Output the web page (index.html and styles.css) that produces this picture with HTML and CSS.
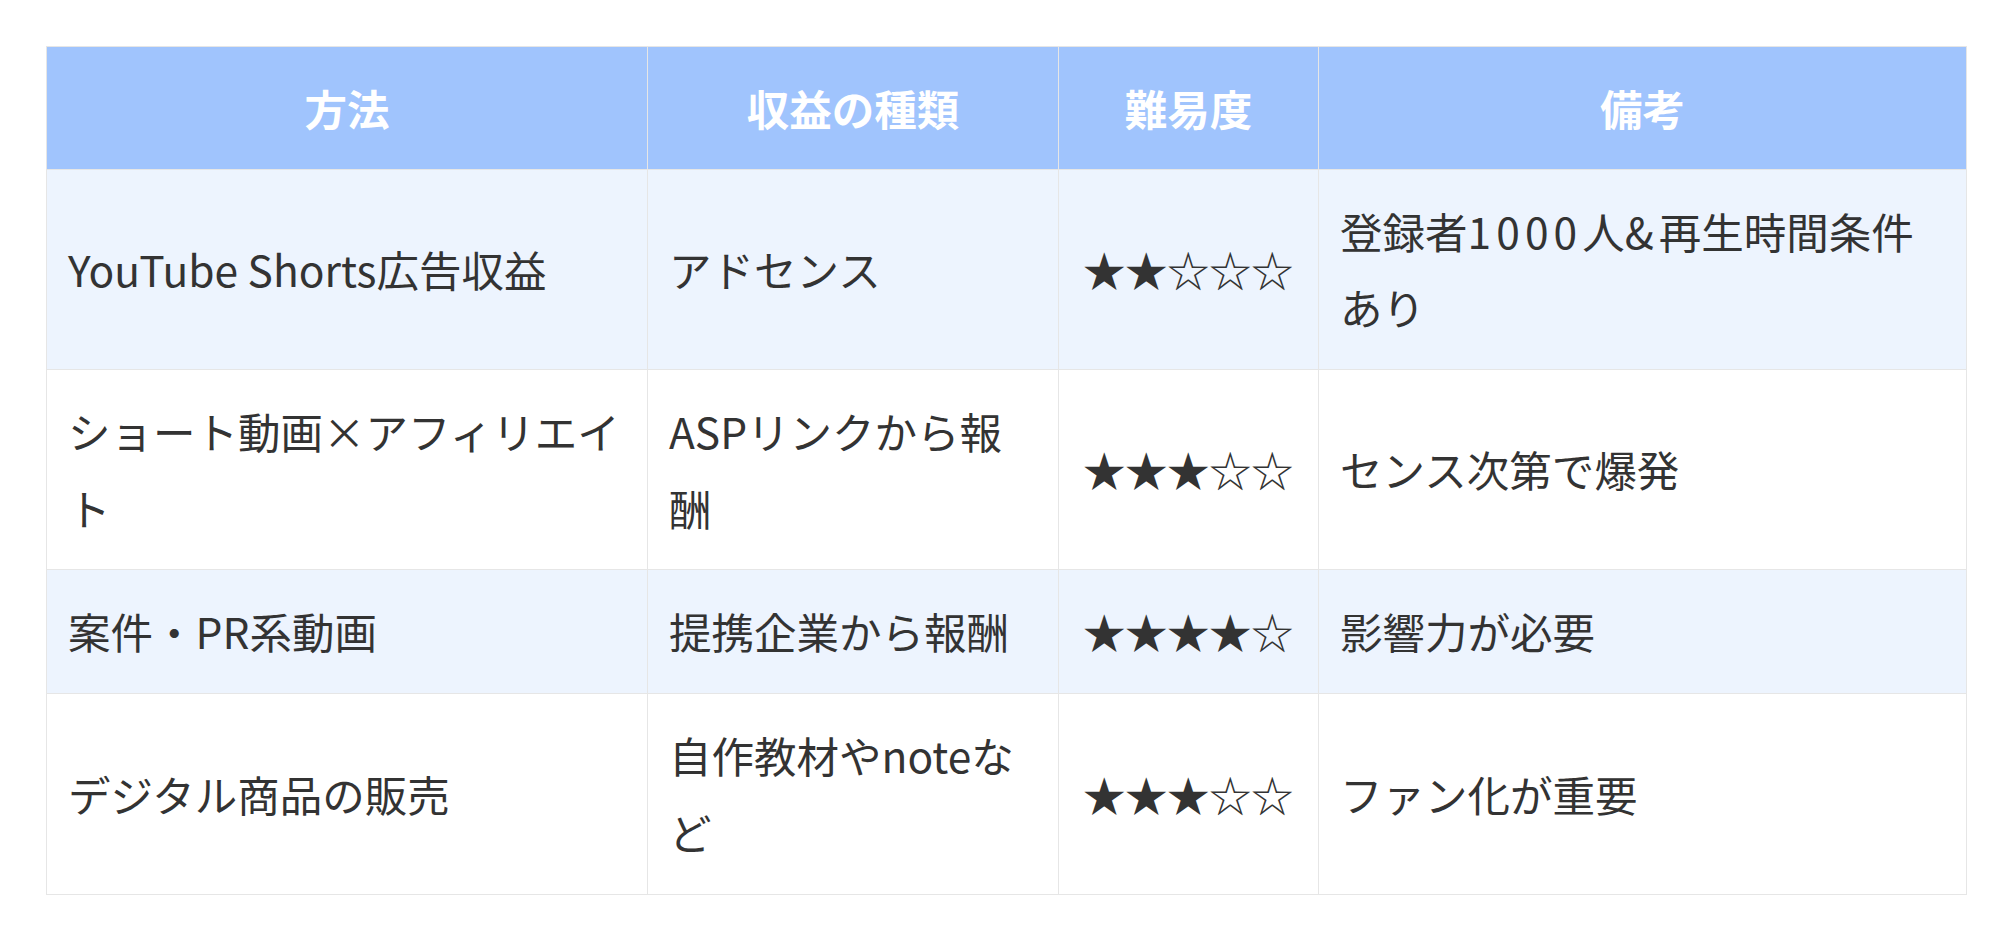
FILE: index.html
```html
<!DOCTYPE html>
<html lang="ja">
<head>
<meta charset="utf-8">
<title>収益化の方法</title>
<link rel="stylesheet" href="styles.css">
</head>
<body>
<div class="page">
  <table class="compare">
    <colgroup>
      <col class="c-method">
      <col class="c-type">
      <col class="c-level">
      <col class="c-note">
    </colgroup>
    <thead>
      <tr>
        <th>方法</th>
        <th>収益の種類</th>
        <th>難易度</th>
        <th>備考</th>
      </tr>
    </thead>
    <tbody>
      <tr class="odd">
        <td>YouTube Shorts広告収益</td>
        <td>アドセンス</td>
        <td class="stars">★★☆☆☆</td>
        <td>登録者<span class="num">1000</span>人<span class="num">&amp;</span>再生時間条件<span class="nobr">あり</span></td>
      </tr>
      <tr>
        <td>ショート動画×アフィリエイト</td>
        <td>ASPリンクから報酬</td>
        <td class="stars">★★★☆☆</td>
        <td>センス次第で爆発</td>
      </tr>
      <tr class="odd">
        <td>案件・PR系動画</td>
        <td>提携企業から報酬</td>
        <td class="stars">★★★★☆</td>
        <td>影響力が必要</td>
      </tr>
      <tr>
        <td>デジタル商品の販売</td>
        <td>自作教材やnoteなど</td>
        <td class="stars">★★★☆☆</td>
        <td>ファン化が重要</td>
      </tr>
    </tbody>
  </table>
</div>
</body>
</html>
```
FILE: styles.css
```css
html, body {
  margin: 0;
  padding: 0;
  background: #ffffff;
}

.page {
  padding: 46px 0 0 46px;
}

.compare {
  border-collapse: collapse;
  table-layout: fixed;
  width: 1920px;
  font-family: "Noto Sans CJK JP", "Noto Sans", sans-serif;
  font-size: 42.5px;
  line-height: 1.8;
  color: #333333;
  border: 1px solid #e6e6e6;
}

.c-method { width: 601px; }
.c-type { width: 411px; }
.c-level { width: 260px; }
.c-note { width: 648px; }

.compare th,
.compare td {
  border: 1px solid #e6e6e6;
  padding: 23.2px 21px;
  vertical-align: middle;
  text-align: left;
}

.compare th {
  background: #a0c4fd;
  color: #ffffff;
  font-weight: 700;
  text-align: center;
  padding-top: 22.5px;
  padding-bottom: 22.5px;
}

.compare tr.odd td {
  background: #edf4fe;
}

.compare td.stars {
  white-space: nowrap;
  padding-left: 24px;
  padding-right: 10px;
  letter-spacing: -0.5px;
}

.num {
  letter-spacing: 0.12em;
}

.nobr {
  white-space: nowrap;
}
```
